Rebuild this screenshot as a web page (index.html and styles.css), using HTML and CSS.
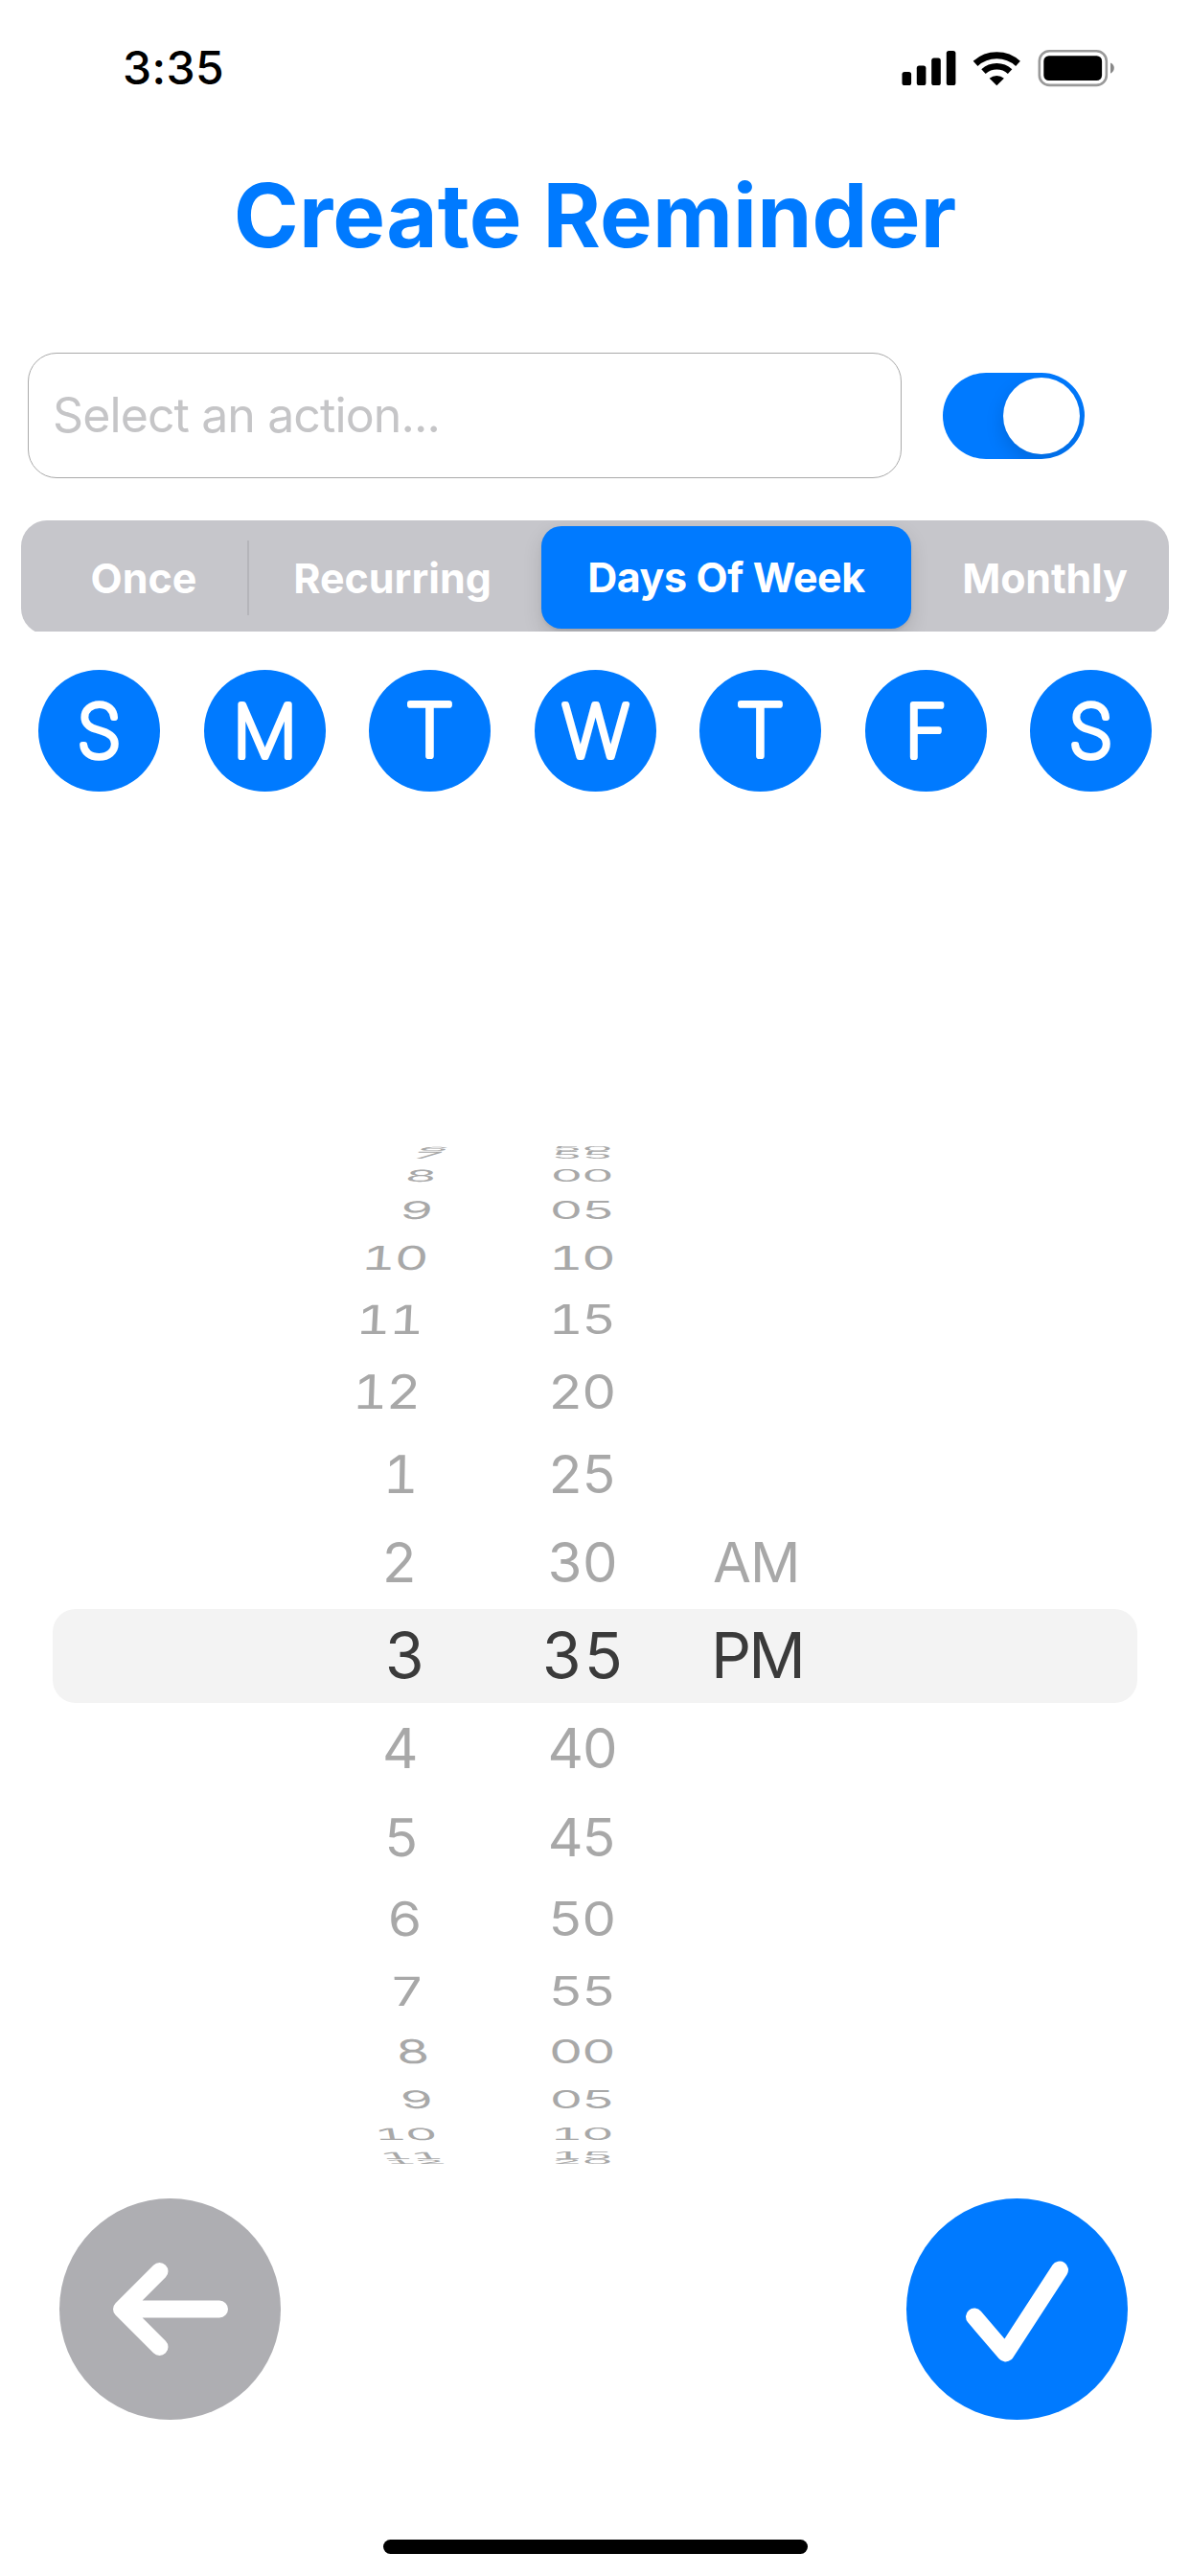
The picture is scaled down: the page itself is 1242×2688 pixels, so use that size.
FILE: index.html
```html
<!DOCTYPE html>
<html lang="en">
<head>
<meta charset="utf-8">
<title>Create Reminder</title>
<link rel="stylesheet" href="styles.css">
</head>
<body>
<header class="status">
  <span class="clock">3:35</span>
  <svg class="status-icons" width="224" height="40" viewBox="0 0 224 40" aria-hidden="true">
    <g fill="#000">
      <rect x="1.5" y="24" width="9.6" height="14" rx="2.6"/>
      <rect x="16.8" y="17.6" width="9.6" height="20.4" rx="2.6"/>
      <rect x="32.2" y="9.6" width="9.6" height="28.4" rx="2.6"/>
      <rect x="47.8" y="2" width="9.6" height="36" rx="2.6"/>
      <path d="M100.3 38.3 92.7 30.8A11.6 11.6 0 0 1 107.9 30.8Z"/>
    </g>
    <g fill="none" stroke="#000">
      <path d="M78.1 15.3A33 33 0 0 1 122.5 15.3" stroke-width="7"/>
      <path d="M86.5 23.6A20.6 20.6 0 0 1 114.1 23.6" stroke-width="6.6"/>
    </g>
    <rect x="144.8" y="2.3" width="70" height="35.6" rx="10.5" fill="none" stroke="#999" stroke-width="2.6"/>
    <rect x="149.3" y="7.2" width="60.8" height="25.8" rx="5.5" fill="#000"/>
    <path d="M219 14.6Q222.8 16.4 222.8 20T219 25.8Z" fill="#888"/>
  </svg>
</header>

<h1 class="title">Create Reminder</h1>

<div class="action-row">
  <div class="field">Select an action...</div>
  <div class="switch"><span class="knob"></span></div>
</div>

<nav class="segments">
  <div class="track">
    <span class="seg once">Once</span>
    <span class="divider"></span>
    <span class="seg recurring">Recurring</span>
    <span class="seg selected">Days Of Week</span>
    <span class="seg monthly">Monthly</span>
  </div>
</nav>

<div class="days">
  <svg class="day" viewBox="0 0 127 127"><text x="63.5" y="90.5">S</text></svg>
  <svg class="day" viewBox="0 0 127 127"><text x="63.5" y="90.5">M</text></svg>
  <svg class="day" viewBox="0 0 127 127"><text class="wide" x="63.5" y="90.5">T</text></svg>
  <svg class="day" viewBox="0 0 127 127"><text x="63.5" y="90.5">W</text></svg>
  <svg class="day" viewBox="0 0 127 127"><text class="wide" x="63.5" y="90.5">T</text></svg>
  <svg class="day" viewBox="0 0 127 127"><text x="63.5" y="90.5">F</text></svg>
  <svg class="day" viewBox="0 0 127 127"><text x="63.5" y="90.5">S</text></svg>
</div>

<section class="picker">
  <div class="row r1"><span class="hour">6</span><span class="minute">50</span></div>
  <div class="row r2"><span class="hour">7</span><span class="minute">55</span></div>
  <div class="row r3"><span class="hour">8</span><span class="minute">00</span></div>
  <div class="row r4"><span class="hour">9</span><span class="minute">05</span></div>
  <div class="row r5"><span class="hour">10</span><span class="minute">10</span></div>
  <div class="row r6"><span class="hour">11</span><span class="minute">15</span></div>
  <div class="row r7"><span class="hour">12</span><span class="minute">20</span></div>
  <div class="row r8"><span class="hour">1</span><span class="minute">25</span></div>
  <div class="row r9"><span class="hour">2</span><span class="minute">30</span><span class="period">AM</span></div>
  <div class="row r10"><span class="hour">3</span><span class="minute">35</span><span class="period">PM</span></div>
  <div class="row r11"><span class="hour">4</span><span class="minute">40</span></div>
  <div class="row r12"><span class="hour">5</span><span class="minute">45</span></div>
  <div class="row r13"><span class="hour">6</span><span class="minute">50</span></div>
  <div class="row r14"><span class="hour">7</span><span class="minute">55</span></div>
  <div class="row r15"><span class="hour">8</span><span class="minute">00</span></div>
  <div class="row r16"><span class="hour">9</span><span class="minute">05</span></div>
  <div class="row r17"><span class="hour">10</span><span class="minute">10</span></div>
  <div class="row r18"><span class="hour">11</span><span class="minute">15</span></div>
  <div class="row r19"><span class="hour">12</span><span class="minute">20</span></div>
</section>

<footer class="actions">
  <svg class="button back" viewBox="0 0 231 231" aria-label="Back">
    <path d="M104.5 76 65 115.5 104.5 155M65 115.5H167"/>
  </svg>
  <svg class="button confirm" viewBox="0 0 231 231" aria-label="Confirm">
    <path d="M71 123.5 103.5 161.5 160 74.5"/>
  </svg>
</footer>
<div class="home-indicator"></div>
</body>
</html>
```
FILE: styles.css
```css
* { box-sizing: border-box; }

body {
  margin: 0;
  width: 1242px;
  height: 2688px;
  display: flex;
  flex-direction: column;
  overflow: hidden;
  background: #fff;
  font-family: Inter, "Liberation Sans", sans-serif;
}

body > * { flex: none; }

.status {
  height: 141px;
  padding: 0 78px 0 128px;
  display: flex;
  align-items: center;
  justify-content: space-between;
}

.clock { font-size: 48px; font-weight: 500; line-height: 1; letter-spacing: .4px; }
.status-icons { display: block; }

.title {
  margin: 30px 0 0;
  height: 108px;
  line-height: 108px;
  text-align: center;
  font-size: 92px;
  font-weight: 700;
  letter-spacing: .15px;
  color: #007aff;
}

.action-row {
  margin-top: 89px;
  padding-left: 29px;
  display: flex;
  align-items: center;
  gap: 43px;
}

.field {
  width: 912px;
  height: 131px;
  padding-left: 25px;
  border: 1.5px solid #aaa;
  border-radius: 30px;
  line-height: 128px;
  font-size: 50px;
  letter-spacing: -0.9px;
  color: #c5c5c7;
}

.switch {
  width: 148px;
  height: 90px;
  padding: 5px;
  display: flex;
  justify-content: flex-end;
  border-radius: 45px;
  background: #007aff;
  overflow: hidden;
}

.knob {
  width: 80px;
  height: 80px;
  border-radius: 50%;
  background: #fff;
  box-shadow: 0 8px 20px rgba(0, 0, 0, .14);
}

.segments {
  margin: 44px 22px 0;
  height: 116px;
  overflow: hidden;
}

.track {
  height: 119px;
  display: flex;
  align-items: center;
  border-radius: 27px;
  background: #c6c6cb;
  color: #fff;
  font-size: 43px;
  font-weight: 700;
}

.seg { text-align: center; white-space: nowrap; }
.once { width: 236px; padding-left: 20px; }
.divider { width: 2px; height: 78px; background: #b5b5ba; }
.recurring { width: 305px; padding-right: 6px; }
.selected {
  width: 386px;
  height: 107px;
  line-height: 107px;
  border-radius: 21px;
  background: #007aff;
  letter-spacing: -0.4px;
  box-shadow: 0 8px 20px rgba(0, 0, 0, .13), 0 2px 3px rgba(0, 0, 0, .08);
}
.monthly { flex: 1; padding-left: 10px; letter-spacing: -0.2px; }

.days {
  margin-top: 40px;
  padding: 0 40px;
  display: flex;
  justify-content: space-between;
}

.day {
  width: 127px;
  height: 127px;
  border-radius: 50%;
  background: #007aff;
}

.day text {
  font-size: 75px;
  font-weight: 100;
  text-anchor: middle;
  fill: #fff;
  stroke: #fff;
  stroke-width: 6.2px;
  stroke-linejoin: round;
}

.day .wide {
  transform: scaleX(1.09);
  transform-origin: 63.5px 0;
}

/* Time wheel: every row has no height of its own and sits on its centre line;
   --step is the distance to the previous one. */
.picker {
  position: relative;
  margin-top: 371px;
  height: 1062px;
  display: flex;
  flex-direction: column;
  color: #a8a8a8;
  font-size: 58px;
  line-height: 70px;
  font-feature-settings: "tnum";
  letter-spacing: -1.5px;
}

.picker::before {
  content: "";
  position: absolute;
  left: 55px;
  right: 55px;
  top: 482px;
  height: 98px;
  border-radius: 24px;
  background: #f3f3f3;
}

.row {
  position: relative;
  flex: none;
  height: 0;
  margin-top: var(--step);
  display: grid;
  grid-template-columns: 434px 308px 1fr;
  grid-template-rows: 0;
  align-items: center;
}

.hour {
  justify-self: end;
  transform-origin: 100% 50%;
  transform: translateX(var(--shift)) skewX(var(--lean)) scale(var(--sx), var(--sy));
}

.minute {
  justify-self: center;
  margin-left: 39px;
  transform: scale(var(--sx), var(--sy));
}

.period { margin-left: 2px; letter-spacing: -1px; }

.r1  { --step: 2px;    --shift: 34px; --lean: -50deg; --sx: .88; --sy: .1; }
.r2  { --step: 6px;    --shift: 28px; --lean: -35deg; --sx: .89; --sy: .17; }
.r3  { --step: 22.3px; --shift: 21px; --lean: -12deg; --sx: .9;  --sy: .29; }
.r4  { --step: 35.9px; --shift: 17px; --lean: -8deg;  --sx: .93; --sy: .44; }
.r5  { --step: 50.1px; --shift: 12px; --lean: -5deg;  --sx: .95; --sy: .59; }
.r6  { --step: 63.4px; --shift: 7px;  --lean: -3deg;  --sx: .96; --sy: .72; }
.r7  { --step: 75.3px; --shift: 4px;  --lean: -2deg;  --sx: .97; --sy: .85; }
.r8  { --step: 85.7px; --shift: 1px;  --lean: -1deg;  --sx: .98; --sy: .94; }
.r9  { --step: 92.6px; --shift: 0px;  --lean: 0deg;   --sx: 1;   --sy: 1; }
.r10 { --step: 96.4px; --shift: 9px;  --lean: 0deg;   --sx: 1;   --sy: 1; font-size: 66px; color: #3a3a3a; }
.r11 { --step: 97.1px; --shift: 1px;  --lean: 0deg;   --sx: 1;   --sy: 1; }
.r12 { --step: 92.9px; --shift: 2px;  --lean: 1deg;   --sx: .98; --sy: .94; }
.r13 { --step: 85.3px; --shift: 5px;  --lean: 2deg;   --sx: .97; --sy: .85; }
.r14 { --step: 76px;   --shift: 8px;  --lean: 3deg;   --sx: .96; --sy: .72; }
.r15 { --step: 63px;   --shift: 13px; --lean: 5deg;   --sx: .95; --sy: .59; }
.r16 { --step: 50px;   --shift: 17px; --lean: 8deg;   --sx: .93; --sy: .44; }
.r17 { --step: 36px;   --shift: 21px; --lean: 12deg;  --sx: .9;  --sy: .29; }
.r18 { --step: 22px;   --shift: 26px; --lean: 35deg;  --sx: .89; --sy: .17; }
.r19 { --step: 7px;    --shift: 30px; --lean: 50deg;  --sx: .88; --sy: .1; }

.r10 .minute { margin-left: 42px; letter-spacing: .5px; }
.r10 .period { margin-left: 0; letter-spacing: -3px; }

.actions {
  margin-top: 35px;
  padding: 0 65px 0 62px;
  display: flex;
  justify-content: space-between;
}

.button {
  width: 231px;
  height: 231px;
  border-radius: 50%;
  fill: none;
  stroke: #fff;
  stroke-width: 18px;
  stroke-linecap: round;
  stroke-linejoin: round;
}

.back { background: #aeaeb2; }
.confirm { background: #007aff; }

.home-indicator {
  width: 443px;
  height: 15px;
  margin: 125px auto 0;
  border-radius: 8px;
  background: #000;
}
```
